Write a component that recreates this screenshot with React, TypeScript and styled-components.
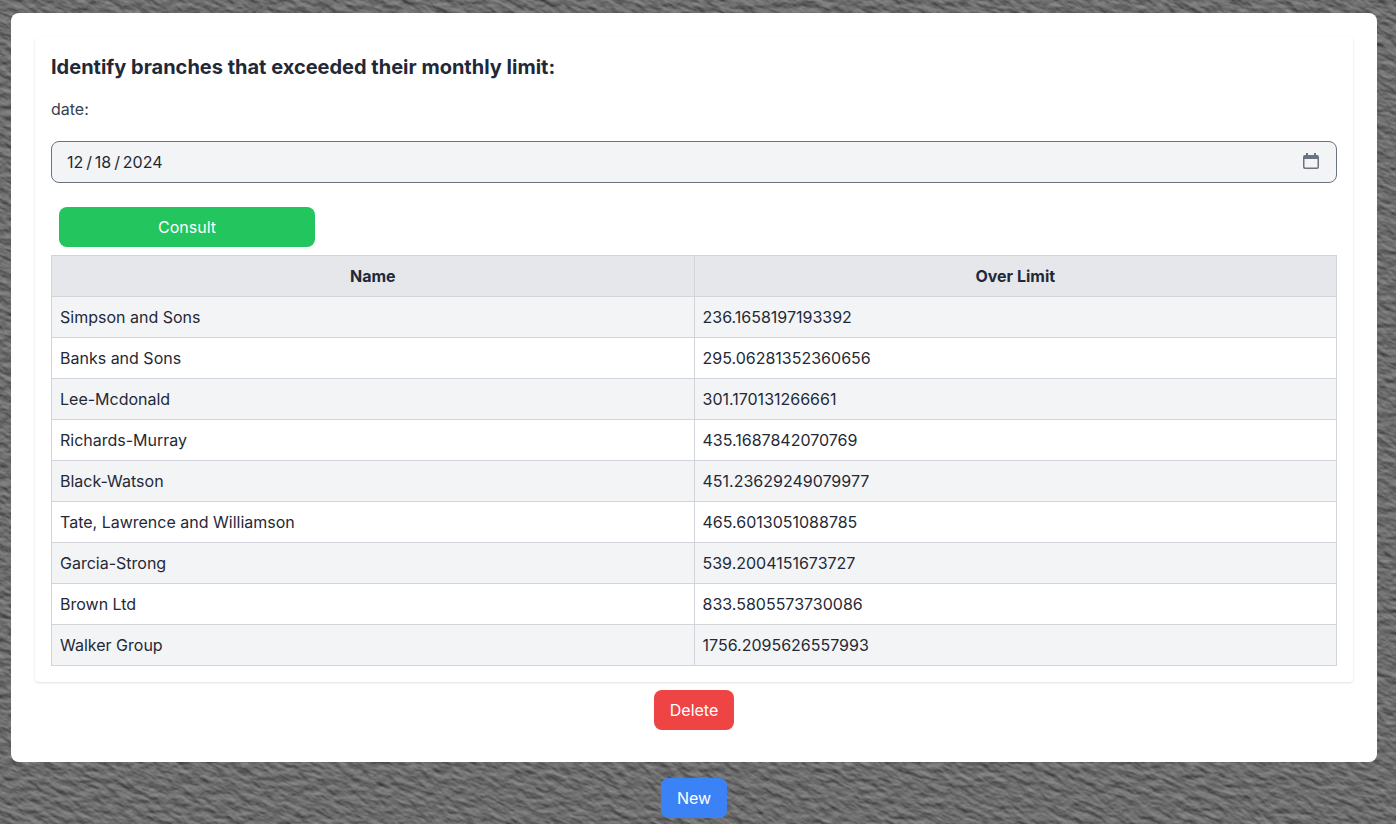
import React from "react";
import styled, { createGlobalStyle, css } from "styled-components";

const GlobalStyle = createGlobalStyle`
  *, *::before, *::after { box-sizing: border-box; }
  html { background: #686868; }
  body {
    margin: 0;
    font-family: Inter, "Liberation Sans", sans-serif;
    font-size: 16px;
    line-height: 24px;
    color: #1f2937;
    overflow: hidden;
  }
`;

const Page = styled.main`
  height: 824px;
  padding: 13px 19px 0 11px;
  display: flex;
  flex-direction: column;
  align-items: center;
  gap: 16px;
  position: relative;
  overflow: hidden;
`;

const StoneSvg = styled.svg`
  position: absolute;
  inset: 0;
  width: 100%;
  height: 100%;
`;

const Panel = styled.section`
  position: relative;
  width: 100%;
  padding: 24px;
  border-radius: 8px;
  background: #fff;
  display: flex;
  flex-direction: column;
  align-items: center;
`;

const Card = styled.div`
  width: 100%;
  padding: 16px;
  border-radius: 4px;
  background: #fff;
  box-shadow: 0 1px 3px rgba(0, 0, 0, 0.1), 0 1px 2px -1px rgba(0, 0, 0, 0.1);
`;

const Title = styled.h2`
  margin: 0 0 16px;
  font-size: 20px;
  line-height: 28px;
  font-weight: 700;
`;

const Label = styled.div`
  margin-bottom: 20px;
  color: #374151;
`;

const DateField = styled.div`
  display: flex;
  align-items: center;
  justify-content: space-between;
  height: 42px;
  margin-bottom: 24px;
  padding: 0 17px 0 15px;
  border: 1px solid #6b7280;
  border-radius: 8px;
  background: #f3f4f6;
`;

const DateValue = styled.span`
  word-spacing: -1.6px;
`;

const CalendarSvg = styled.svg`
  display: block;
  width: 16px;
  height: 16px;
  margin-top: -2px;
`;

type Tone = "green" | "red" | "blue";
const tones: Record<Tone, string> = {
  green: "#22c55e",
  red: "#ef4444",
  blue: "#3b82f6",
};

const Button = styled.button<{ $tone: Tone; $wide?: boolean; $spaced?: boolean }>`
  position: relative;
  display: block;
  height: 40px;
  padding: 8px 16px;
  border: 0;
  border-radius: 8px;
  background: ${(p) => tones[p.$tone]};
  color: #fff;
  font: inherit;
  ${(p) => p.$wide && css`width: 256px;`}
  ${(p) => p.$spaced && css`margin: 8px;`}
`;

const Table = styled.table`
  width: 100%;
  table-layout: fixed;
  border-collapse: collapse;
`;

const HeadCell = styled.th`
  padding: 8px;
  border: 1px solid #d1d5db;
  background: #e5e7eb;
  font-weight: 700;
  text-align: center;
`;

const Row = styled.tr`
  &:nth-child(odd) { background: #f3f4f6; }
`;

const Cell = styled.td`
  padding: 8px;
  border: 1px solid #d1d5db;
`;

const branches: [string, string][] = [
  ["Simpson and Sons", "236.1658197193392"],
  ["Banks and Sons", "295.06281352360656"],
  ["Lee-Mcdonald", "301.170131266661"],
  ["Richards-Murray", "435.1687842070769"],
  ["Black-Watson", "451.23629249079977"],
  ["Tate, Lawrence and Williamson", "465.6013051088785"],
  ["Garcia-Strong", "539.2004151673727"],
  ["Brown Ltd", "833.5805573730086"],
  ["Walker Group", "1756.2095626557993"],
];

const StoneTexture = () => (
  <StoneSvg aria-hidden="true">
    <filter id="stone" x="0" y="0" width="100%" height="100%" colorInterpolationFilters="sRGB">
      <feTurbulence type="fractalNoise" baseFrequency="0.08 0.16" numOctaves={4} seed={7} />
      <feDiffuseLighting surfaceScale={1.15} diffuseConstant={0.6} lightingColor="#fff">
        <feDistantLight azimuth={250} elevation={45} />
      </feDiffuseLighting>
    </filter>
    <g transform="rotate(24 698 412)">
      <rect x="-200" y="-400" width="1800" height="1640" filter="url(#stone)" />
    </g>
  </StoneSvg>
);

const CalendarIcon = () => (
  <CalendarSvg viewBox="0 0 16 16" aria-hidden="true">
    <path
      fill="#6b7280"
      fillRule="evenodd"
      d="M3 0h2v2h6V0h2v2h1a2 2 0 0 1 2 2v10a2 2 0 0 1-2 2H2a2 2 0 0 1-2-2V4a2 2 0 0 1 2-2h1zM1.5 6v7.7a.8.8 0 0 0 .8.8h11.4a.8.8 0 0 0 .8-.8V6z"
    />
  </CalendarSvg>
);

export default function App() {
  return (
    <>
      <GlobalStyle />
      <Page>
        <StoneTexture />
        <Panel>
          <Card>
            <Title>Identify branches that exceeded their monthly limit:</Title>
            <Label>date:</Label>
            <DateField>
              <DateValue>12 / 18 / 2024</DateValue>
              <CalendarIcon />
            </DateField>
            <Button $tone="green" $wide $spaced>Consult</Button>
            <Table>
              <thead>
                <tr>
                  <HeadCell>Name</HeadCell>
                  <HeadCell>Over Limit</HeadCell>
                </tr>
              </thead>
              <tbody>
                {branches.map(([name, amount]) => (
                  <Row key={name}>
                    <Cell>{name}</Cell>
                    <Cell>{amount}</Cell>
                  </Row>
                ))}
              </tbody>
            </Table>
          </Card>
          <Button $tone="red" $spaced>Delete</Button>
        </Panel>
        <Button $tone="blue">New</Button>
      </Page>
    </>
  );
}
